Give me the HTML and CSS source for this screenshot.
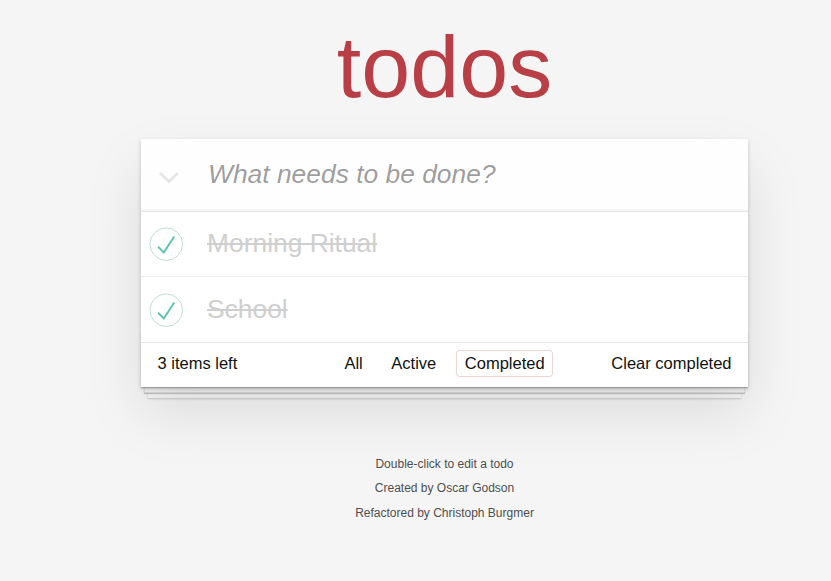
FILE: index.html
```html
<!DOCTYPE html>
<html lang="en">
<head>
<meta charset="utf-8">
<title>todos</title>
<link rel="stylesheet" href="styles.css">
</head>
<body>
<div class="page">
  <header class="masthead">
    <h1 class="title">todos</h1>
  </header>
  <section class="todoapp">
    <div class="new-row">
      <span class="toggle-all">
        <svg width="22" height="13" viewBox="0 0 22 13"><polyline points="2,2 11,10.5 20,2" fill="none" stroke="#e6e6e6" stroke-width="3"/></svg>
      </span>
      <input class="new-todo" placeholder="What needs to be done?">
    </div>
    <ul class="todo-list">
      <li class="todo completed">
        <svg class="toggle" width="44" height="44" viewBox="-10 -18 100 135"><circle cx="50" cy="50" r="50" fill="none" stroke="#bddad5" stroke-width="3"/><path fill="#5dc2af" d="M72 25L42 71 27 56l-4 4 20 20 34-52z"/></svg>
        <span class="label">Morning Ritual</span>
      </li>
      <li class="todo completed">
        <svg class="toggle" width="44" height="44" viewBox="-10 -18 100 135"><circle cx="50" cy="50" r="50" fill="none" stroke="#bddad5" stroke-width="3"/><path fill="#5dc2af" d="M72 25L42 71 27 56l-4 4 20 20 34-52z"/></svg>
        <span class="label">School</span>
      </li>
    </ul>
    <footer class="footer">
      <span class="todo-count">3 items left</span>
      <div class="filters">
        <a class="filter">All</a>
        <a class="filter">Active</a>
        <a class="filter selected">Completed</a>
      </div>
      <span class="clear-completed">Clear completed</span>
    </footer>
  </section>
  <footer class="info">
    <p>Double-click to edit a todo</p>
    <p>Created by Oscar Godson</p>
    <p>Refactored by Christoph Burgmer</p>
  </footer>
</div>
</body>
</html>
```

FILE: styles.css
```css
html, body {
  margin: 0;
  padding: 0;
}

body {
  background: #f5f5f5;
  color: #111111;
  font-family: "Liberation Sans", Arial, Helvetica, sans-serif;
  font-size: 15.4px;
  line-height: 21.56px;
}

.page {
  width: 607px;
  margin-left: 141px;
}

.masthead {
  padding-top: 23px;
  margin-bottom: 28px;
}

.title {
  margin: 0;
  font-size: 88px;
  line-height: 88px;
  font-weight: 400;
  text-align: center;
  color: #b83f45;
}

.todoapp {
  position: relative;
  background: #fff;
  box-shadow: 0 2px 4px 0 rgba(0, 0, 0, 0.2), 0 27px 55px 0 rgba(0, 0, 0, 0.1);
}

.new-row {
  display: flex;
  align-items: center;
  height: 71.5px;
  box-shadow: inset 0 -2px 1px rgba(0, 0, 0, 0.03);
  background: rgba(0, 0, 0, 0.003);
}

.toggle-all {
  width: 55px;
  flex: none;
  display: flex;
  justify-content: center;
  margin-top: 5px;
}

.toggle-all svg {
  display: block;
}

.new-todo {
  flex: 1;
  min-width: 0;
  height: 71.5px;
  box-sizing: border-box;
  margin: 0;
  padding: 17.6px 17.6px 17.6px 12px;
  border: none;
  outline: none;
  background: transparent;
  font-family: inherit;
  font-size: 26.4px;
  line-height: 1.4em;
  color: #111;
}

.new-todo::placeholder {
  font-style: italic;
  font-weight: 400;
  color: rgba(0, 0, 0, 0.4);
}

.todo-list {
  margin: 0;
  padding: 0;
  list-style: none;
  border-top: 1px solid #e6e6e6;
}

.todo {
  display: flex;
  align-items: center;
  border-bottom: 1px solid #ededed;
  font-size: 26.4px;
}

.toggle {
  flex: none;
  display: block;
}

.label {
  margin-left: 22px;
  padding: 16.5px 16.5px 16.5px 0;
  line-height: 1.2;
  color: #4d4d4d;
}

.todo.completed .label {
  color: #cfcfcf;
  text-decoration: line-through;
}

.footer {
  position: relative;
  display: grid;
  grid-template-columns: 1fr auto 1fr;
  align-items: center;
  height: 22px;
  padding: 9.5px 16.5px 12.5px;
  font-size: 16.5px;
  line-height: 22px;
  color: #111;
  border-top: 1px solid #e6e6e6;
  margin-top: -1px;
}

.footer::before {
  content: "";
  position: absolute;
  right: 0;
  bottom: 0;
  left: 0;
  height: 55px;
  overflow: hidden;
  z-index: -1;
  box-shadow: 0 1px 1px rgba(0, 0, 0, 0.2),
    0 8.8px 0 -3.3px #f6f6f6,
    0 9.9px 1px -3.3px rgba(0, 0, 0, 0.2),
    0 17.6px 0 -6.6px #f6f6f6,
    0 18.7px 2px -6.6px rgba(0, 0, 0, 0.2);
}

.todo-count {
  justify-self: start;
  position: relative;
}

.filters {
  text-align: center;
  white-space: nowrap;
  position: relative;
}

.filter {
  margin: 3.3px;
  padding: 3.3px 7.7px;
  border: 1px solid transparent;
  border-radius: 3.3px;
  color: inherit;
  text-decoration: none;
}

.filter.selected {
  border-color: rgba(175, 47, 47, 0.2);
}

.clear-completed {
  justify-self: end;
  position: relative;
}

.info {
  margin-top: 71px;
  color: #4d4d4d;
  font-size: 12px;
  text-align: center;
  text-shadow: 0 1px 0 rgba(255, 255, 255, 0.5);
}

.info p {
  margin: 12.4px 0;
  line-height: 1;
}
```
